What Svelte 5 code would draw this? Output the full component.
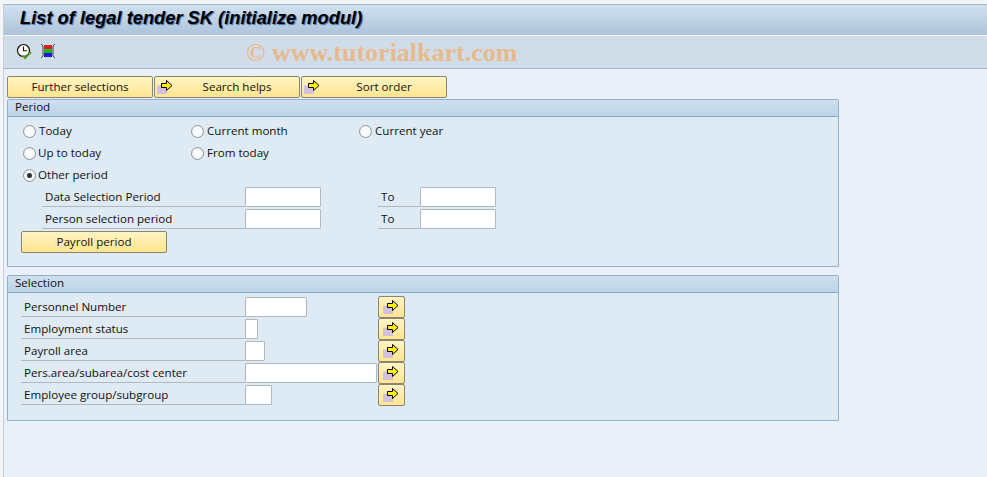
<script>
  const radioRows = [
    [{ label: "Today", gap: 3 }, { label: "Current month", gap: 3 }, { label: "Current year", gap: 3 }],
    [{ label: "Up to today", gap: 2 }, { label: "From today", gap: 3 }],
    [{ label: "Other period", gap: 2, on: true }],
  ];
  const periods = ["Data Selection Period", "Person selection period"];
  const selection = [
    { label: "Personnel Number", w: 62 },
    { label: "Employment status", w: 13 },
    { label: "Payroll area", w: 20 },
    { label: "Pers.area/subarea/cost center", w: 132 },
    { label: "Employee group/subgroup", w: 27 },
  ];
</script>

{#snippet arrow()}
  <svg class="arrow" viewBox="0 0 16 14" width="16" height="14" aria-hidden="true">
    <rect x="0" y="5.5" width="10" height="8.5" fill="#d3c0dc" />
    <path d="M4.5 3.5h5v-3l5.5 5-5.5 5v-3h-5z" fill="#fff200" stroke="#000" stroke-width="1" />
  </svg>
{/snippet}

<div class="page">
  <header class="title">List of legal tender SK (initialize modul)</header>

  <div class="toolbar">
    <svg class="tool" viewBox="0 0 17 17" width="17" height="17" aria-hidden="true">
      <circle cx="7.5" cy="7.5" r="6" fill="#fff" stroke="#111" stroke-width="1.2" />
      <path d="M7.5 3.5v4.2h3.4" fill="none" stroke="#111" stroke-width="1.1" />
      <path d="M6.5 12.5l2.6 2.6 6-6" fill="none" stroke="#5b9a2c" stroke-width="2" />
    </svg>
    <svg class="tool two" viewBox="0 0 16 16" width="16" height="16" aria-hidden="true">
      <rect x="4" y="2" width="8" height="4" fill="#e02020" />
      <rect x="4" y="6" width="8" height="4" fill="#18b818" />
      <rect x="4" y="10" width="8" height="4" fill="#1818e0" />
      <path d="M1 1l2 2v10l-2 2M15 1l-2 2v10l2 2" fill="none" stroke="#222" stroke-width="0.8" />
    </svg>
    <span class="mark">© www.tutorialkart.com</span>
  </div>

  <main class="content">
    <div class="tabs">
      <button class="btn tab">Further selections</button>
      <button class="btn tab pad">{@render arrow()}Search helps</button>
      <button class="btn tab pad">{@render arrow()}Sort order</button>
    </div>

    <section class="group period">
      <h2>Period</h2>
      <div class="body">
        {#each radioRows as row}
          <div class="radios">
            {#each row as r}
              <span class="radio-item">
                <span class="radio" class:on={r.on}></span>
                <span class="radio-text" style="margin-left: {r.gap}px">{r.label}</span>
              </span>
            {/each}
          </div>
        {/each}
        {#each periods as p}
          <div class="range">
            <span class="lbl wide">{p}</span>
            <span class="field w76"></span>
            <span class="lbl to">To</span>
            <span class="field w76"></span>
          </div>
        {/each}
        <button class="btn payroll">Payroll period</button>
      </div>
    </section>

    <section class="group sel">
      <h2>Selection</h2>
      <div class="body">
        {#each selection as s}
          <div class="sel-row">
            <span class="lbl sel-lbl">{s.label}</span>
            <span class="slot"><span class="field" style="width: {s.w}px"></span></span>
            <button class="btn more">{@render arrow()}</button>
          </div>
        {/each}
      </div>
    </section>
  </main>
</div>

<style>
  :global(body) { margin: 0; background: #f3f5f9; }
  .page {
    height: 477px; box-sizing: border-box; padding: 4px 0 0 3px; overflow: hidden;
    display: flex; flex-direction: column;
    font-family: "Open Sans", Tahoma, sans-serif; font-size: 11.6px; color: #111;
  }
  .title {
    height: 32px; flex: none; box-sizing: border-box; padding: 3px 0 0 16px;
    border-top: 1px solid #a9b6c6; border-left: 1px solid #c3cfdc;
    border-bottom: 1px solid #f0f5fa;
    background: linear-gradient(#d0e1ef, #adc3da);
    font: italic bold 18.3px/20px "Liberation Sans", Arial, sans-serif; color: #000;
    text-shadow: 1px 1px 1px #3f6fa8;
  }
  .toolbar {
    height: 33px; flex: none; box-sizing: border-box; display: flex; align-items: center;
    padding: 0 0 2px 12px; background: #d0dde8;
    border-bottom: 1px solid #a5b6cb; border-left: 1px solid #c3cfdc;
  }
  .tool { flex: none; }
  .two { margin-left: 7px; }
  .mark {
    margin-left: 190px; margin-top: 3px; white-space: nowrap;
    font: bold 26px "Liberation Serif", serif; color: #e7ba8d;
  }
  .content {
    flex: 1; background: #e9f0f7; padding: 7px 0 0 3px;
    border-left: 1px solid #c3cfdc;
  }
  .tabs { display: flex; gap: 1px; height: 22px; }
  .btn {
    box-sizing: border-box; margin: 0; padding: 0 0 2px; position: relative;
    border: 1px solid #8a8470; border-radius: 2px;
    background: linear-gradient(#fff4c4, #ffe58f);
    font: inherit; color: #111;
  }
  .tab { width: 146px; height: 22px; }
  .pad { padding-left: 20px; }
  .arrow { position: absolute; left: 2px; top: 3px; }
  .group {
    box-sizing: border-box; width: 832px;
    border: 1px solid #8fb0d0; border-radius: 2px 2px 0 0; background: #deeaf4;
  }
  .period { height: 168px; margin-top: 1px; }
  .sel { height: 146px; margin-top: 8px; }
  h2 {
    margin: 0; height: 17px; box-sizing: border-box; padding-left: 7px;
    font: inherit; line-height: 14px; color: #111;
    background: linear-gradient(#cfe0f0, #bcd3e8);
    border-bottom: 1px solid #8ba6c4;
  }
  .period .body { padding: 3px 0 0 15px; }
  .radios { display: flex; height: 22px; align-items: center; }
  .radio-item { width: 168px; display: flex; align-items: center; }
  .radio-text { margin-top: -2px; }
  .radio {
    width: 13px; height: 13px; box-sizing: border-box; flex: none; border-radius: 50%;
    border: 1px solid #8d949c; background: radial-gradient(#fff, #eef1f4);
    display: grid; place-items: center;
  }
  .radio.on::after { content: ""; width: 5px; height: 5px; border-radius: 50%; background: #2a3440; }
  .range { display: flex; height: 22px; margin-left: 19px; }
  .lbl { box-sizing: border-box; border-bottom: 1px solid #b4b8bc; height: 21px; line-height: 22px; }
  .wide { width: 203px; padding-left: 3px; }
  .to { width: 42px; margin-left: 57px; padding-left: 3px; }
  .field {
    display: block; box-sizing: border-box; height: 20px; margin-top: 1px; background: #fff;
    border: 1px solid #b2b8bd; border-radius: 1px; flex: none;
  }
  .w76 { width: 76px; }
  .payroll { display: block; width: 146px; height: 22px; margin: 1px 0 0 -2px; }
  .sel .body { padding: 3px 0 0 13px; }
  .sel-row { display: flex; height: 22px; }
  .sel-lbl { width: 224px; padding-left: 3px; }
  .slot { width: 133px; flex: none; }
  .more { width: 27px; height: 22px; }
  .more .arrow { left: 4px; top: 3px; }
</style>
